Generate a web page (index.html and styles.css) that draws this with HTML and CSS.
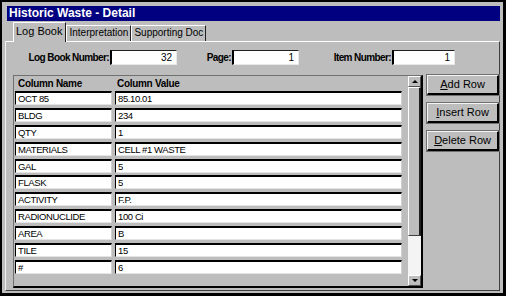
FILE: index.html
```html
<!DOCTYPE html>
<html>
<head>
<meta charset="utf-8">
<link rel="stylesheet" href="styles.css">
</head>
<body>
<div class="window">
  <div class="titlebar">Historic Waste - Detail</div>
  <div class="tabs">
    <div class="tab active">Log Book</div>
    <div class="tab">Interpretation</div>
    <div class="tab">Supporting Doc</div>
  </div>
  <div class="panel">
    <div class="fields">
      <div class="field f1"><span class="label">Log Book Number:</span><span class="input">32</span></div>
      <div class="field f2"><span class="label">Page:</span><span class="input">1</span></div>
      <div class="field f3"><span class="label">Item Number:</span><span class="input">1</span></div>
    </div>
    <div class="main">
      <div class="grid">
        <div class="grid-body">
          <div class="grid-head"><span class="h1">Column Name</span><span class="h2">Column Value</span></div>
          <div class="rows">
            <div class="row"><div class="cell name">OCT 85</div><div class="cell value">85.10.01</div></div>
            <div class="row"><div class="cell name">BLDG</div><div class="cell value">234</div></div>
            <div class="row"><div class="cell name">QTY</div><div class="cell value">1</div></div>
            <div class="row"><div class="cell name">MATERIALS</div><div class="cell value">CELL #1 WASTE</div></div>
            <div class="row"><div class="cell name">GAL</div><div class="cell value">5</div></div>
            <div class="row"><div class="cell name">FLASK</div><div class="cell value">5</div></div>
            <div class="row"><div class="cell name">ACTIVITY</div><div class="cell value">F.P.</div></div>
            <div class="row"><div class="cell name">RADIONUCLIDE</div><div class="cell value">100 Ci</div></div>
            <div class="row"><div class="cell name">AREA</div><div class="cell value">B</div></div>
            <div class="row"><div class="cell name">TILE</div><div class="cell value">15</div></div>
            <div class="row"><div class="cell name">#</div><div class="cell value">6</div></div>
          </div>
        </div>
        <div class="scrollbar">
          <div class="sb-btn"><span class="arrow-up"></span></div>
          <div class="sb-thumb"></div>
          <div class="sb-track"></div>
          <div class="sb-btn"><span class="arrow-down"></span></div>
        </div>
      </div>
      <div class="buttons">
        <div class="btn"><u>A</u>dd Row</div>
        <div class="btn"><u>I</u>nsert Row</div>
        <div class="btn"><u>D</u>elete Row</div>
      </div>
    </div>
  </div>
</div>
</body>
</html>
```
FILE: styles.css
```css
body {
  margin: 0;
  background: #fff;
  font-family: "Liberation Sans", Arial, sans-serif;
}

.window {
  width: 506px;
  height: 296px;
  box-sizing: border-box;
  border: 2px solid #000;
  border-right-width: 3px;
  border-bottom-width: 3px;
  background: #bdbdbd;
  padding: 4px 3px 2px 3px;
  display: flex;
  flex-direction: column;
}

.titlebar {
  height: 15px;
  margin-left: 2px;
  background: #000080;
  color: #fff;
  font-weight: bold;
  font-size: 12px;
  line-height: 15px;
  padding-left: 2px;
}

.tabs {
  height: 20px;
  display: flex;
  align-items: flex-end;
  padding-left: 8px;
  position: relative;
  z-index: 1;
}

.tab {
  height: 16px;
  box-sizing: border-box;
  border-top: 1px solid #fff;
  border-left: 1px solid #fff;
  border-right: 1px solid #202020;
  font-size: 10px;
  line-height: 14px;
  padding: 0 2px 0 2px;
  color: #000;
}

.tab.active {
  height: 20px;
  margin-bottom: -1px;
  font-size: 11px;
  line-height: 17px;
  padding: 0 3px 0 2px;
  background: #bdbdbd;
}

.panel {
  flex: 1;
  border-top: 1px solid #fff;
  border-left: 1px solid #f0f0f0;
  border-right: 1px solid #404040;
  border-bottom: 1px solid #404040;
  display: flex;
  flex-direction: column;
}

.fields {
  margin-top: 8px;
  height: 15px;
  display: flex;
}

.field {
  display: flex;
  align-items: center;
}

.label {
  font-size: 10px;
  font-weight: bold;
  text-align: right;
  letter-spacing: -0.6px;
  padding-right: 1px;
  box-sizing: border-box;
}

.f1 .label { width: 104px; }
.f2 .label { width: 55px; }
.f3 .label { width: 93px; }

.input {
  height: 15px;
  box-sizing: border-box;
  background: #fff;
  border-top: 1px solid #202020;
  border-left: 2px solid #000;
  border-right: 1px solid #e8e8e8;
  border-bottom: 1px solid #e8e8e8;
  text-align: right;
  font-size: 10px;
  line-height: 13px;
  padding-right: 4px;
  width: 67px;
}

.f3 .input { width: 63px; }

.main {
  margin-top: 10px;
  margin-left: 7px;
  display: flex;
}

.grid {
  width: 411px;
  height: 213px;
  box-sizing: border-box;
  border-top: 1px solid #707070;
  border-left: 1px solid #707070;
  border-right: 2px solid #000;
  border-bottom: 2px solid #000;
  display: flex;
}

.grid-body {
  flex: 1;
  display: flex;
  flex-direction: column;
}

.grid-head {
  height: 15px;
  display: flex;
  align-items: center;
  font-size: 10px;
  font-weight: bold;
  letter-spacing: -0.3px;
  padding-left: 4px;
}

.h1 { width: 99px; }

.rows {
  display: flex;
  flex-direction: column;
  gap: 2.9px;
  padding-left: 1px;
}

.row {
  display: flex;
  gap: 3px;
}

.cell {
  height: 14px;
  box-sizing: border-box;
  background: #fff;
  border-top: 2px solid #000;
  border-left: 1px solid #000;
  border-right: 1px solid #d0d0d0;
  border-bottom: 1px solid #e4e4e4;
  font-size: 9.5px;
  line-height: 11px;
  letter-spacing: -0.4px;
  padding-left: 2px;
  white-space: nowrap;
}

.cell.name { width: 97px; }
.cell.value { width: 287px; }

.scrollbar {
  width: 13px;
  display: flex;
  flex-direction: column;
  background: #f2f2f2;
}

.sb-btn {
  height: 11px;
  box-sizing: border-box;
  background: #bdbdbd;
  border-top: 1px solid #fff;
  border-left: 1px solid #fff;
  border-right: 1px solid #505050;
  border-bottom: 1px solid #505050;
  display: flex;
  align-items: center;
  justify-content: center;
}

.arrow-up {
  width: 0;
  height: 0;
  border-left: 3px solid transparent;
  border-right: 3px solid transparent;
  border-bottom: 3px solid #000;
}

.arrow-down {
  width: 0;
  height: 0;
  border-left: 3px solid transparent;
  border-right: 3px solid transparent;
  border-top: 3px solid #000;
}

.sb-thumb {
  height: 149px;
  box-sizing: border-box;
  background: #bdbdbd;
  border-left: 1px solid #fff;
  border-top: 1px solid #fff;
  border-right: 2px solid #202020;
  border-bottom: 1px solid #404040;
}

.sb-track {
  flex: 1;
  background: #f4f4f4;
}

.buttons {
  margin-left: 4px;
  width: 72px;
  display: flex;
  flex-direction: column;
  gap: 8px;
}

.btn {
  height: 20px;
  box-sizing: border-box;
  border-top: 1px solid #f4f4f4;
  border-left: 1px solid #f4f4f4;
  border-right: 2px solid #000;
  border-bottom: 2px solid #000;
  box-shadow: 0 0 0 1px #707070;
  font-size: 11px;
  line-height: 17px;
  text-align: center;
  color: #000;
}
```
